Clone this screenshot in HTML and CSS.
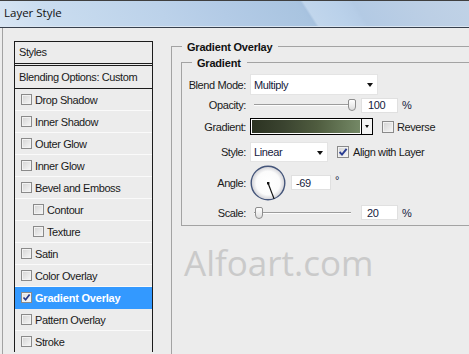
FILE: index.html
```html
<!DOCTYPE html>
<html>
<head>
<meta charset="utf-8">
<title>Layer Style</title>
<link rel="stylesheet" href="styles.css">
</head>
<body>
<div class="window">
  <div class="titlebar"><span class="title">Layer Style</span></div>
  <div class="client">
    <div class="sidebar">
      <div class="list">
        <div class="list-head">Styles</div>
        <div class="list-blend">Blending Options: Custom</div>
        <div class="row"><span class="cb"></span><span>Drop Shadow</span></div>
        <div class="row"><span class="cb"></span><span>Inner Shadow</span></div>
        <div class="row"><span class="cb"></span><span>Outer Glow</span></div>
        <div class="row"><span class="cb"></span><span>Inner Glow</span></div>
        <div class="row"><span class="cb"></span><span>Bevel and Emboss</span></div>
        <div class="row sub"><span class="cb"></span><span>Contour</span></div>
        <div class="row sub"><span class="cb"></span><span>Texture</span></div>
        <div class="row"><span class="cb"></span><span>Satin</span></div>
        <div class="row"><span class="cb"></span><span>Color Overlay</span></div>
        <div class="row sel"><span class="cb"><svg width="9" height="9" viewBox="0 0 9 9"><path d="M1.5 4.5 L3.6 6.8 L7.6 1.6" fill="none" stroke="#24358a" stroke-width="1.7"/></svg></span><span>Gradient Overlay</span></div>
        <div class="row"><span class="cb"></span><span>Pattern Overlay</span></div>
        <div class="row last"><span class="cb"></span><span>Stroke</span></div>
      </div>
    </div>
    <div class="main">
      <div class="group outer">
        <div class="gtitle"><span>Gradient Overlay</span></div>
        <div class="group inner">
          <div class="gtitle"><span>Gradient</span></div>
          <div class="frow r-blend">
            <span class="lbl">Blend Mode:</span>
            <div class="select sel-blend"><span class="val">Multiply</span><i class="arrow"></i></div>
          </div>
          <div class="frow r-opacity">
            <span class="lbl">Opacity:</span>
            <div class="slider"><div class="track"></div><div class="thumb" style="left:98px"></div></div>
            <div class="num n100">100</div>
            <span class="unit">%</span>
          </div>
          <div class="frow r-grad">
            <span class="lbl">Gradient:</span>
            <div class="swatch"><div class="swatch-fill"></div></div>
            <div class="gbtn"><i class="arrow small"></i></div>
            <span class="cbx"></span><span class="cbtext">Reverse</span>
          </div>
          <div class="frow r-style">
            <span class="lbl">Style:</span>
            <div class="select sel-style"><span class="val">Linear</span><i class="arrow"></i></div>
            <span class="cbx align"><svg width="10" height="10" viewBox="0 0 10 10"><path d="M1.6 5 L4 7.6 L8.6 1.8" fill="none" stroke="#2a3d92" stroke-width="1.9"/></svg></span><span class="cbtext">Align with Layer</span>
          </div>
          <div class="frow r-angle">
            <span class="lbl">Angle:</span>
            <svg class="dial" width="36" height="36" viewBox="0 0 36 36">
              <defs>
                <radialGradient id="dg" cx="50%" cy="50%" r="50%">
                  <stop offset="0" stop-color="#ffffff"/>
                  <stop offset="0.7" stop-color="#fbfbfb"/>
                  <stop offset="1" stop-color="#cfcfd4"/>
                </radialGradient>
              </defs>
              <circle cx="18" cy="18" r="16.8" fill="url(#dg)" stroke="#44557a" stroke-width="1.4"/>
              <line x1="18" y1="18" x2="24.1" y2="33.9" stroke="#111" stroke-width="1.2"/>
              <rect x="17" y="17" width="2.4" height="2.4" fill="#111"/>
            </svg>
            <div class="num n-angle">-69</div>
            <span class="deg">°</span>
          </div>
          <div class="frow r-scale">
            <span class="lbl">Scale:</span>
            <div class="slider"><div class="track"></div><div class="thumb" style="left:5px"></div></div>
            <div class="num n20">20</div>
            <span class="unit">%</span>
          </div>
        </div>
        <div class="watermark">Alfoart.com</div>
      </div>
    </div>
  </div>
</div>
</body>
</html>
```
FILE: styles.css
```css
* { box-sizing: border-box; }
html, body { margin: 0; padding: 0; }
body {
  width: 469px;
  height: 354px;
  overflow: hidden;
  background: #ececec;
  font-family: "Liberation Sans", Arial, sans-serif;
  font-size: 11px;
  letter-spacing: -0.4px;
  color: #1a1a1a;
}
.window { display: flex; flex-direction: column; height: 354px; overflow: hidden; }

.titlebar {
  flex: none;
  height: 28px;
  border-top: 1px solid #3f3f3f;
  border-bottom: 1px solid #37404d;
  box-shadow: inset 0 -1px 0 #dbe6f2;
  background: linear-gradient(57deg, #d9e6f4 0%, #c9dcef 12%, #bcd2ea 35%, #b3cbe6 48%, #a9c4e0 64%, #a7c2df 65.2%, #c1d6ec 65.8%, #bad1ea 72%, #b6cde7 75%, #b3cae4 76%, #bccfe5 90%, #c0d2e6 100%);
  padding: 4px 0 0 4px;
}
.title {
  font-family: "Open Sans", "Noto Sans", sans-serif;
  font-size: 11.5px;
  line-height: 16px;
  letter-spacing: 0;
  color: #111;
}

.client { flex: 1; display: flex; min-height: 0; overflow: hidden; }

.sidebar {
  flex: none;
  width: 151px;
  margin-left: 2px;
  border-left: 1px solid #a2a2a2;
}
.list {
  margin: 13px 0 0 11px;
  width: 139px;
  border: 1px solid #1c1c1c;
  border-bottom: none;
}
.list-head {
  height: 24px;
  line-height: 21px;
  padding-left: 4px;
  border-bottom: 3px double #1c1c1c;
}
.list-blend {
  height: 23px;
  line-height: 22px;
  padding-left: 4px;
  border-bottom: 1px solid #1c1c1c;
}
.row {
  height: 22px;
  display: flex;
  align-items: center;
  padding-left: 6px;
  border-bottom: 1px solid #fafafa;
}
.row.last { height: 21px; border-bottom: none; }
.row.sub { padding-left: 18px; }
.row.sel {
  background: #3399ff;
  border-bottom-color: #3399ff;
  color: #fff;
  font-weight: bold;
  letter-spacing: -0.2px;
}
.cb {
  flex: none;
  width: 11px;
  height: 11px;
  margin-right: 3px;
  border: 1px solid #8a8a8a;
  background: linear-gradient(135deg, #d3d3d3, #f7f7f7);
  box-shadow: inset 0 0 0 1px #f2f2f2;
  display: flex;
  align-items: center;
  justify-content: center;
}
.row.sel .cb { background: linear-gradient(135deg, #dcdcdc, #fafafa); }

.main {
  flex: 1;
  min-width: 0;
  padding-left: 18px;
  display: flex;
  flex-direction: column;
}

.group {
  display: flex;
  flex-direction: column;
  border-left: 1px solid #a3a3a3;
  border-bottom: 1px solid #a3a3a3;
}
.group.outer { margin-top: 18px; flex: 1; border-bottom: none; }
.group.inner { margin: 9px 0 0 9px; padding-bottom: 5px; }
.gtitle {
  display: flex;
  align-items: center;
  height: 13px;
  margin: -6px 0 0 -1px;
  font-weight: bold;
  letter-spacing: -0.2px;
  color: #111;
}
.gtitle::before {
  content: "";
  width: 11px;
  height: 1px;
  background: #a3a3a3;
  margin-right: 5px;
}
.gtitle::after {
  content: "";
  flex: 1;
  height: 1px;
  background: #a3a3a3;
  margin-left: 6px;
}

.frow { display: flex; align-items: center; }
.r-blend { margin-top: 5px; height: 21px; }
.r-opacity { margin-top: 2px; height: 16px; }
.r-grad { margin-top: 5px; height: 17px; }
.r-style { margin-top: 7px; height: 20px; }
.r-angle { margin-top: 3px; height: 35px; }
.r-scale { margin-top: 5px; height: 15px; }

.lbl {
  flex: none;
  width: 64px;
  margin-right: 4px;
  text-align: right;
  color: #1a1a1a;
}

.select {
  flex: none;
  height: 100%;
  background: #fff;
  border: 1px solid #e4e4e4;
  display: flex;
  align-items: center;
  padding-left: 3px;
  color: #14203c;
}
.select .val { flex: 1; }
.sel-blend { width: 128px; }
.sel-style { width: 78px; }
.arrow {
  flex: none;
  width: 0;
  height: 0;
  border-left: 3.5px solid transparent;
  border-right: 3.5px solid transparent;
  border-top: 4px solid #111;
  margin-right: 4px;
  margin-top: 1px;
}
.arrow.small {
  border-left-width: 2.5px;
  border-right-width: 2.5px;
  border-top-width: 3px;
  margin: 0;
}

.slider {
  flex: none;
  position: relative;
  width: 111px;
  height: 100%;
  display: flex;
  align-items: center;
}
.track {
  margin-left: 4px;
  width: 97px;
  height: 2px;
  border-top: 1px solid #9c9c9c;
  border-bottom: 1px solid #fdfdfd;
}
.thumb {
  position: absolute;
  top: 50%;
  margin-top: -6px;
  width: 8px;
  height: 12px;
  border: 1px solid #8d8d8d;
  border-radius: 2px 2px 4px 4px;
  background: linear-gradient(to bottom, #ffffff, #dedede);
}

.num {
  flex: none;
  height: 15px;
  background: #fff;
  border: 1px solid #e0e0e0;
  display: flex;
  align-items: center;
  color: #14203c;
}
.n100 { width: 37px; padding-left: 6px; }
.n20 { width: 37px; padding-left: 5px; }
.n-angle { width: 40px; padding-left: 4px; margin-left: 5px; }
.unit { margin-left: 4px; color: #14203c; }
.deg {
  align-self: flex-start;
  margin-top: 9px;
  margin-left: 4px;
  line-height: 12px;
  color: #14203c;
}

.swatch {
  flex: none;
  width: 112px;
  height: 17px;
  border: 1px solid #000;
  padding: 1px;
  background: #fff;
}
.swatch-fill {
  height: 100%;
  background: linear-gradient(to right, #2c3322 0%, #3b4430 30%, #4f5c3f 60%, #667857 85%, #748866 100%);
}
.gbtn {
  flex: none;
  width: 11px;
  height: 17px;
  border: 1px solid #000;
  border-left: none;
  background: #f4f4f4;
  display: flex;
  align-items: center;
  justify-content: center;
}

.cbx {
  flex: none;
  width: 12px;
  height: 12px;
  margin-left: 9px;
  border: 1px solid #8a8a8a;
  background: linear-gradient(135deg, #d3d3d3, #f7f7f7);
  box-shadow: inset 0 0 0 1px #f2f2f2;
  display: flex;
  align-items: center;
  justify-content: center;
}
.cbtext { margin-left: 3px; color: #1a1a1a; }
.cbx.align + .cbtext { margin-left: 4px; }

.dial { flex: none; display: block; }

.watermark {
  margin: 19px 0 0 12px;
  font-family: "Open Sans", "Noto Sans", sans-serif;
  font-size: 35px;
  line-height: 35px;
  letter-spacing: 0;
  color: #cacaca;
}
```
